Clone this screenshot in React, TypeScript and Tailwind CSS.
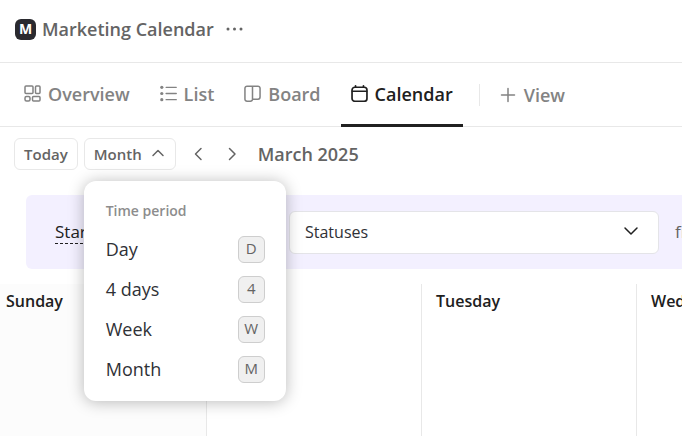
import React, { useState } from 'react';
import clsx from 'clsx';

type IconProps = { className?: string };

function OverviewIcon({ className }: IconProps) {
  return (
    <svg viewBox="0 0 17 17" className={className} fill="none" stroke="currentColor" strokeWidth="1.5">
      <rect x="1" y="1" width="8" height="7.5" rx="1" />
      <rect x="11.5" y="1" width="4.5" height="7.5" rx="1" />
      <rect x="1" y="11.5" width="5" height="4.5" rx="1.5" />
      <rect x="8.5" y="11.5" width="7.5" height="4.5" rx="1" />
    </svg>
  );
}

function ListIcon({ className }: IconProps) {
  return (
    <svg viewBox="0 0 18 18" className={className} fill="none" stroke="currentColor" strokeWidth="1.5" strokeLinecap="round">
      <path d="M6.5 2.5H17.2M6.5 9H17.2M6.5 15.5H17.2" />
      <g fill="currentColor" stroke="none">
        <circle cx="1.9" cy="2.5" r="1.7" />
        <circle cx="1.9" cy="9" r="1.7" />
        <circle cx="1.9" cy="15.5" r="1.7" />
      </g>
    </svg>
  );
}

function BoardIcon({ className }: IconProps) {
  return (
    <svg viewBox="0 0 18 18" className={className} fill="none" stroke="currentColor" strokeWidth="1.6" strokeLinejoin="round">
      <path d="M9 1.2H3.2A2.2 2.2 0 0 0 1 3.4V15A2.2 2.2 0 0 0 3.2 17.2H6.8A2.2 2.2 0 0 0 9 15V1.2H14.8A2.2 2.2 0 0 1 17 3.4V12.8A2.2 2.2 0 0 1 14.8 15H9" />
    </svg>
  );
}

function CalendarIcon({ className }: IconProps) {
  return (
    <svg viewBox="0 0 18 18" className={className} fill="none" stroke="currentColor" strokeWidth="1.8" strokeLinecap="round">
      <rect x="1.1" y="2.4" width="15.8" height="14.8" rx="3" />
      <path d="M1.5 6.6H16.5M4.8 0.9V2.4M13.2 0.9V2.4" />
    </svg>
  );
}

function PlusIcon({ className }: IconProps) {
  return (
    <svg viewBox="0 0 16 16" className={className} fill="none" stroke="currentColor" strokeWidth="1.5" strokeLinecap="round">
      <path d="M8 1.5V14.5M1.5 8H14.5" />
    </svg>
  );
}

const CHEVRONS = {
  up: 'M3 9.5L8 4.5L13 9.5',
  down: 'M2 5L8 11L14 5',
  left: 'M11 2.5L5.5 8L11 13.5',
  right: 'M5.5 2.5L11 8L5.5 13.5',
};

function Chevron({ dir, className }: IconProps & { dir: keyof typeof CHEVRONS }) {
  return (
    <svg viewBox="0 0 16 16" className={className} fill="none" stroke="currentColor" strokeWidth="1.5" strokeLinecap="round" strokeLinejoin="round">
      <path d={CHEVRONS[dir]} />
    </svg>
  );
}

const TABS = [
  { name: 'Overview', icon: OverviewIcon },
  { name: 'List', icon: ListIcon },
  { name: 'Board', icon: BoardIcon },
  { name: 'Calendar', icon: CalendarIcon },
];

const PERIODS = [
  { name: 'Day', shortcut: 'D' },
  { name: '4 days', shortcut: '4' },
  { name: 'Week', shortcut: 'W' },
  { name: 'Month', shortcut: 'M' },
];

const DAYS = ['Sunday', 'Monday', 'Tuesday', 'Wednesday'];

export default function App() {
  const [activeTab, setActiveTab] = useState('Calendar');
  const [period, setPeriod] = useState('Month');
  const [menuOpen, setMenuOpen] = useState(true);

  return (
    <div className="flex h-screen flex-col overflow-hidden bg-white font-['Open_Sans',sans-serif] text-[#202020]">
      <header className="flex h-[63px] shrink-0 items-center border-b border-[#e8e8e8] px-[15px] pb-1">
        <span className="flex size-[21px] items-center justify-center rounded-md bg-[#2a2a2f] text-sm font-bold text-white">M</span>
        <h1 className="ml-1.5 text-lg font-semibold text-[#646464]">Marketing Calendar</h1>
        <button aria-label="More options" className="ml-3 text-[#646464]">
          <svg viewBox="0 0 18 18" className="size-[18px]" fill="currentColor">
            <circle cx="2" cy="9" r="1.5" />
            <circle cx="8.5" cy="9" r="1.5" />
            <circle cx="15" cy="9" r="1.5" />
          </svg>
        </button>
      </header>

      <nav className="flex h-16 shrink-0 items-center gap-2.5 border-b border-[#e8e8e8] px-3.5 text-lg font-semibold text-[#838383]">
        {TABS.map(({ name, icon: Icon }) => (
          <button
            key={name}
            onClick={() => setActiveTab(name)}
            className={clsx(
              '-mb-px flex h-16 items-center gap-[7px] border-b-3 px-2.5',
              activeTab === name ? 'border-[#202020] text-[#202020]' : 'border-transparent'
            )}
          >
            <Icon className="size-[17px]" />
            {name}
          </button>
        ))}
        <span className="ml-1.5 h-[22px] w-px bg-[#e8e8e8]" />
        <button className="flex items-center gap-2 px-2.5">
          <PlusIcon className="size-4" />
          View
        </button>
      </nav>

      <div className="mt-[11px] flex h-8 shrink-0 items-center px-3.5 text-[#646464]">
        <button className="h-8 rounded-md border border-[#e8e8e8] px-[9px] text-[15px] font-semibold">Today</button>
        <div className="relative ml-1.5">
          <button
            onClick={() => setMenuOpen(!menuOpen)}
            className="flex h-8 items-center gap-2 rounded-md border border-[#e8e8e8] px-[9px] text-[15px] font-semibold"
          >
            Month
            <Chevron dir="up" className="size-4" />
          </button>
          {menuOpen && (
            <div className="absolute top-[43px] left-0 z-10 w-[202px] rounded-xl bg-white pt-5 pb-3 shadow-[0_1px_16px_rgba(0,0,0,0.28)]">
              <div className="px-[22px] text-sm leading-5 font-semibold text-[#8d8d8d]">Time period</div>
              <div className="mt-2">
                {PERIODS.map(({ name, shortcut }) => (
                  <button
                    key={name}
                    onClick={() => setPeriod(name)}
                    aria-pressed={period === name}
                    className="flex h-10 w-full items-center justify-between pr-[21px] pl-[22px] text-lg text-[#2f3136]"
                  >
                    {name}
                    <kbd className="flex size-[27px] items-center justify-center rounded-md border border-[#cecece] bg-[#f0f0f0] font-['Open_Sans',sans-serif] text-[15px] text-[#646464]">
                      {shortcut}
                    </kbd>
                  </button>
                ))}
              </div>
            </div>
          )}
        </div>
        <button aria-label="Previous" className="ml-3 p-0.5">
          <Chevron dir="left" className="size-4" />
        </button>
        <button aria-label="Next" className="ml-3.5 p-0.5">
          <Chevron dir="right" className="size-4" />
        </button>
        <h2 className="ml-4 text-lg font-semibold">March 2025</h2>
      </div>

      <div className="mt-[25px] ml-[26px] flex h-[74px] shrink-0 items-center rounded-l-md bg-[#f3f0ff] pl-[29px] text-[17px] whitespace-nowrap">
        <label htmlFor="status" className="w-[234px] shrink-0">
          <span className="border-b border-dashed border-[#202020]">Start date</span>
        </label>
        <div className="relative w-[370px] shrink-0">
          <select
            id="status"
            className="h-[43px] w-full appearance-none rounded-md border border-[#e4e4e8] bg-white px-[15px] text-base text-[#2f3136]"
          >
            <option>Statuses</option>
          </select>
          <Chevron dir="down" className="pointer-events-none absolute top-3 right-5 size-4" />
        </div>
        <span className="ml-4 text-[#646464]">from</span>
      </div>

      <div className="mt-[15px] flex flex-1">
        {DAYS.map((day, i) => (
          <div
            key={day}
            className={clsx(
              'shrink-0 border-r border-[#e8e8e8] pt-[5px] text-base font-semibold',
              i === 0 ? 'w-[207px] bg-[#fcfcfc] pl-1.5' : 'w-[215px] pl-3.5'
            )}
          >
            {day}
          </div>
        ))}
      </div>
    </div>
  );
}
